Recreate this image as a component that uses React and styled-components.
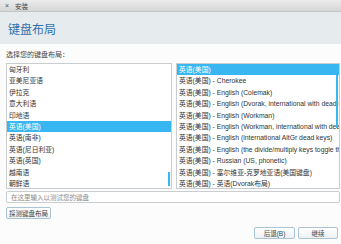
import styled, { createGlobalStyle } from "styled-components";

const GlobalStyle = createGlobalStyle`
  html, body {
    margin: 0;
    padding: 0;
    background: #fcfcfc;
  }
  body {
    font-family: "Liberation Sans", "Noto Sans CJK SC", sans-serif;
    color: #3a3a3a;
  }
`;

const Window = styled.div`
  width: 341px;
  height: 244px;
  overflow: hidden;
  display: flex;
  flex-direction: column;
  background: #fcfcfc;
`;

const TitleBar = styled.div`
  height: 12px;
  display: flex;
  align-items: center;
  gap: 6px;
  padding-left: 5px;
  background: linear-gradient(#ececec, #d6d6d6);
  border-bottom: 1px solid #c4c4c4;
  box-sizing: border-box;
  font-size: 6.5px;
  color: #444;
`;

const Close = styled.span`
  font-size: 7px;
  color: #555;
`;

const Header = styled.div`
  height: 32px;
  display: flex;
  align-items: center;
  padding-left: 8px;
  background: #e6ebee;
  font-size: 12px;
  color: #2f72ad;
`;

const Body = styled.div`
  flex: 1;
  display: flex;
  flex-direction: column;
  padding: 7px 1px 0 6px;
`;

const Label = styled.div`
  font-size: 7px;
  line-height: 8px;
  color: #444;
`;

const Lists = styled.div`
  display: flex;
  gap: 4px;
  margin-top: 4px;
  height: 126px;
`;

const List = styled.div`
  position: relative;
  width: ${(p) => p.width}px;
  box-sizing: border-box;
  border: 1px solid #c9cdd0;
  background: #fff;
  overflow: hidden;
`;

const Row = styled.div`
  height: 11.4px;
  line-height: 11.4px;
  padding-left: 2px;
  font-size: 6.8px;
  white-space: nowrap;
  color: ${(p) => (p.selected ? "#fff" : "#333")};
  background: ${(p) => (p.selected ? "#38b6f1" : "transparent")};
`;

const Scroll = styled.div`
  position: absolute;
  right: 1px;
  top: ${(p) => p.top}px;
  width: 2px;
  height: ${(p) => p.h}px;
  background: #38b6f1;
`;

const Input = styled.div`
  margin-top: 2px;
  height: 12px;
  box-sizing: border-box;
  border: 1px solid #c9cdd0;
  border-radius: 2px;
  background: #fff;
  padding-left: 4px;
  display: flex;
  align-items: center;
  font-size: 6.5px;
  color: #8a8a8a;
`;

const Button = styled.div`
  height: 12px;
  width: ${(p) => p.width}px;
  box-sizing: border-box;
  border: 1px solid #aac4d6;
  border-radius: 2px;
  background: linear-gradient(#ffffff, #eef1f3);
  display: flex;
  align-items: center;
  justify-content: center;
  font-size: 6.5px;
  color: #444;
`;

const DetectRow = styled.div`
  margin-top: 4px;
  display: flex;
`;

const Footer = styled.div`
  margin-top: 8px;
  display: flex;
  justify-content: flex-end;
  gap: 3px;
  padding-right: 2px;
`;

const leftItems = [
  "匈牙利",
  "亚美尼亚语",
  "伊拉克",
  "意大利语",
  "印地语",
  "英语(美国)",
  "英语(南非)",
  "英语(尼日利亚)",
  "英语(英国)",
  "越南语",
  "朝鲜语",
];

const rightItems = [
  "英语(美国)",
  "英语(美国) - Cherokee",
  "英语(美国) - English (Colemak)",
  "英语(美国) - English (Dvorak, international with dead keys)",
  "英语(美国) - English (Workman)",
  "英语(美国) - English (Workman, international with dead keys)",
  "英语(美国) - English (international AltGr dead keys)",
  "英语(美国) - English (the divide/multiply keys toggle the layout)",
  "英语(美国) - Russian (US, phonetic)",
  "英语(美国) - 塞尔维亚-克罗地亚语(美国键盘)",
  "英语(美国) - 英语(Dvorak布局)",
];

export default function App() {
  return (
    <Window>
      <GlobalStyle />
      <TitleBar>
        <Close>×</Close>
        <span>安装</span>
      </TitleBar>
      <Header>键盘布局</Header>
      <Body>
        <Label>选择您的键盘布局：</Label>
        <Lists>
          <List width={166}>
            {leftItems.map((t, i) => (
              <Row key={t} selected={i === 5}>{t}</Row>
            ))}
            <Scroll top={108} h={14} />
          </List>
          <List width={164}>
            {rightItems.map((t, i) => (
              <Row key={t} selected={i === 0}>{t}</Row>
            ))}
            <Scroll top={0} h={64} />
          </List>
        </Lists>
        <Input>在这里输入以测试您的键盘</Input>
        <DetectRow>
          <Button width={45}>探测键盘布局</Button>
        </DetectRow>
        <Footer>
          <Button width={41}>后退(B)</Button>
          <Button width={40}>继续</Button>
        </Footer>
      </Body>
    </Window>
  );
}
